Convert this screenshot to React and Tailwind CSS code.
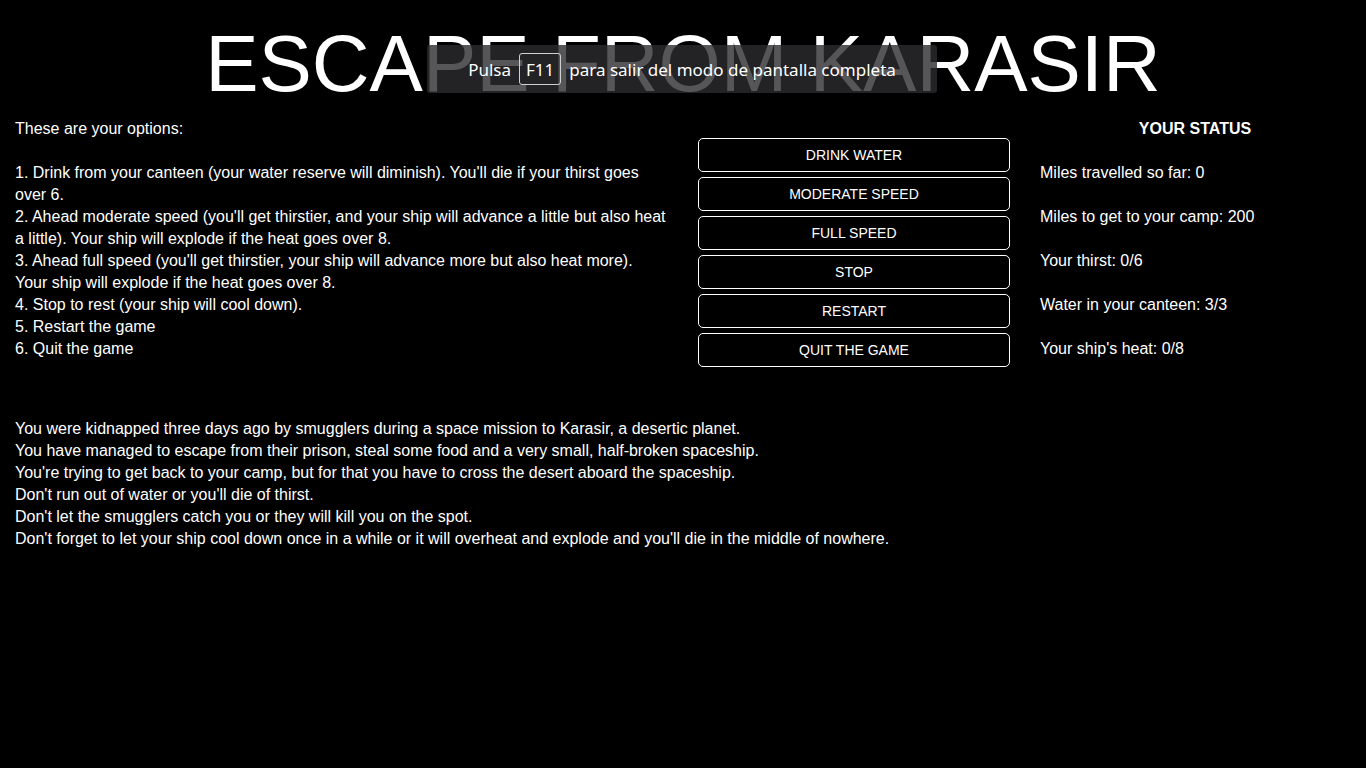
export default function App() {
  const buttons = ["DRINK WATER", "MODERATE SPEED", "FULL SPEED", "STOP", "RESTART", "QUIT THE GAME"];
  const status = [
    "Miles travelled so far: 0",
    "Miles to get to your camp: 200",
    "Your thirst: 0/6",
    "Water in your canteen: 3/3",
    "Your ship's heat: 0/8",
  ];
  return (
    <div className="relative min-h-[768px] w-full bg-black text-white px-[15px]" style={{ fontFamily: '"Liberation Sans", Arial, sans-serif' }}>
      <h1 className="text-center text-[80px] leading-[92px] pt-[18px] font-normal">ESCAPE FROM KARASIR</h1>

      <div className="flex mt-[8px]">
        <div className="w-[654px] text-[16px] leading-[22px]">
          <p>These are your options:</p>
          <p className="mt-[22px]">1. Drink from your canteen (your water reserve will diminish). You'll die if your thirst goes over 6.</p>
          <p>2. Ahead moderate speed (you'll get thirstier, and your ship will advance a little but also heat a little). Your ship will explode if the heat goes over 8.</p>
          <p>3. Ahead full speed (you'll get thirstier, your ship will advance more but also heat more).<br />Your ship will explode if the heat goes over 8.</p>
          <p>4. Stop to rest (your ship will cool down).</p>
          <p>5. Restart the game</p>
          <p>6. Quit the game</p>
        </div>
        <div className="ml-[29px] w-[312px] flex flex-col gap-[5px] pt-[20px]">
          {buttons.map((b) => (
            <button key={b} className="h-[34px] w-full rounded-[5px] border border-white bg-black text-[14px] text-white">
              {b}
            </button>
          ))}
        </div>
        <div className="ml-[30px] w-[310px] text-[16px] leading-[22px] flex flex-col gap-[22px]">
          <p className="text-center font-bold">YOUR STATUS</p>
          {status.map((s) => (
            <p key={s}>{s}</p>
          ))}
        </div>
      </div>

      <div className="mt-[51px] text-[16px] leading-[22px]">
        <p>You were kidnapped three days ago by smugglers during a space mission to Karasir, a desertic planet.</p>
        <p>You have managed to escape from their prison, steal some food and a very small, half-broken spaceship.</p>
        <p>You're trying to get back to your camp, but for that you have to cross the desert aboard the spaceship.</p>
        <p>Don't run out of water or you'll die of thirst.</p>
        <p>Don't let the smugglers catch you or they will kill you on the spot.</p>
        <p>Don't forget to let your ship cool down once in a while or it will overheat and explode and you'll die in the middle of nowhere.</p>
      </div>

      <div
        className="absolute left-[427px] top-[45px] w-[510px] h-[48px] rounded-[3px] bg-[rgba(44,44,48,0.8)] flex items-center justify-center gap-[8px] text-[17px] text-white"
        style={{ fontFamily: '"Noto Sans", "Open Sans", sans-serif' }}
      >
        <span className="pt-[2px]">Pulsa</span>
        <span className="h-[32px] px-[6px] pt-[1px] flex items-center rounded-[3px] border border-[#d0d0d0]">F11</span>
        <span className="pt-[2px]">para salir del modo de pantalla completa</span>
      </div>
    </div>
  );
}
